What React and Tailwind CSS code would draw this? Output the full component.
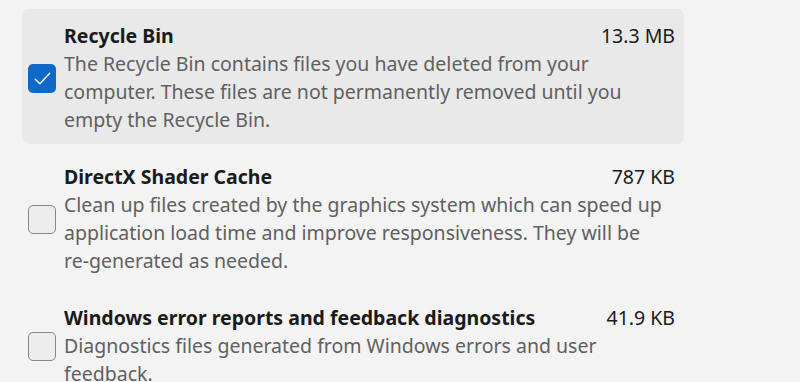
import React, { useState } from "react";

const items = [
  {
    key: "recycle",
    name: "Recycle Bin",
    size: "13.3 MB",
    desc: "The Recycle Bin contains files you have deleted from your computer. These files are not permanently removed until you empty the Recycle Bin.",
    checked: true,
  },
  {
    key: "dx",
    name: "DirectX Shader Cache",
    size: "787 KB",
    desc: (
      <>
        Clean up files created by the graphics system which can speed up
        application load time and improve responsiveness. They will be{" "}
        <span className="whitespace-nowrap">re-generated</span> as needed.
      </>
    ),
    checked: false,
  },
  {
    key: "wer",
    name: "Windows error reports and feedback diagnostics",
    size: "41.9 KB",
    desc: "Diagnostics files generated from Windows errors and user feedback.",
    checked: false,
  },
];

const CheckBox = ({ checked, onClick }) => (
  <button
    onClick={onClick}
    className={
      checked
        ? "w-[28px] h-[29px] shrink-0 rounded-[5px] bg-[#0f67c6] flex items-center justify-center"
        : "w-[28px] h-[29px] shrink-0 rounded-[5px] border-[1.5px] border-[#878787] bg-[#ededed]"
    }
  >
    {checked && (
      <svg width="21" height="21" viewBox="0 0 16 16" fill="none">
        <path
          d="M2.5 8.5l3.5 3.5 7.5-8"
          stroke="white"
          strokeWidth="1.1"
          strokeLinecap="round"
          strokeLinejoin="round"
        />
      </svg>
    )}
  </button>
);

const App = () => {
  const [state, setState] = useState(items.map((i) => i.checked));

  return (
    <div
      className="w-[800px] h-[382px] overflow-hidden bg-[#f3f3f3] pt-[9px] pl-[22px]"
      style={{ fontFamily: '"Noto Sans", "Open Sans", sans-serif' }}
    >
      <div className="w-[662px] flex flex-col gap-[6px]">
        {items.map((item, idx) => (
          <div
            key={item.key}
            className={
              idx === 0
                ? "flex items-center gap-[8px] rounded-[7px] bg-[#e9e9e9] pl-[6px] pr-[9px] pt-[13px] pb-[10px]"
                : "flex items-center gap-[8px] rounded-[7px] pl-[6px] pr-[9px] pt-[13px] pb-[10px]"
            }
          >
            <CheckBox
              checked={state[idx]}
              onClick={() =>
                setState((s) => s.map((v, i) => (i === idx ? !v : v)))
              }
            />
            <div className="flex-1 min-w-0">
              <div className="flex justify-between items-baseline leading-[28px]">
                <span className="text-[19.5px] font-bold text-[#1b1b1b]">
                  {item.name}
                </span>
                <span className="text-[19.5px] text-[#1b1b1b]">{item.size}</span>
              </div>
              <p className="text-[19.5px] leading-[28px] text-[#606060]">
                {item.desc}
              </p>
            </div>
          </div>
        ))}
      </div>
    </div>
  );
};

export default App;
